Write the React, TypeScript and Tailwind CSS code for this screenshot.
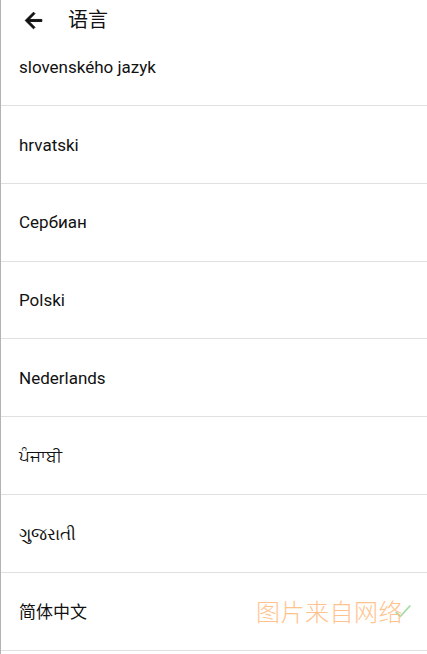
const languages: string[] = [
  "slovenského jazyk",
  "hrvatski",
  "Сербиан",
  "Polski",
  "Nederlands",
  "ਪੰਜਾਬੀ",
  "ગુજરાતી",
  "简体中文",
];

const App = () => {
  return (
    <div
      className="relative w-[427px] h-[654px] bg-white border-l border-[#b4b4b4] flex flex-col overflow-hidden"
      style={{ fontFamily: 'Roboto, "Noto Sans", "Noto Sans CJK SC", sans-serif' }}
    >
      <div className="relative z-10 h-[40px] shrink-0 bg-white flex items-center">
        <svg viewBox="0 0 24 24" className="ml-[20px] w-[25px] h-[25px] fill-[#111] stroke-[#111] stroke-[0.9]">
          <path d="M20 11H7.83l5.59-5.59L12 4l-8 8 8 8 1.41-1.41L7.83 13H20v-2z" />
        </svg>
        <span className="ml-[22px] text-[20px] text-[#111]">语言</span>
      </div>

      <div className="flex-1 overflow-hidden">
        <ul className="-mt-[12px]">
          {languages.map((lang) => (
            <li
              key={lang}
              className="h-[77.86px] flex items-center pl-[18px] pt-[2px] border-b border-[#e0e0e0] text-[17px] text-[#111]"
            >
              {lang}
            </li>
          ))}
        </ul>
      </div>

      <svg
        viewBox="0 0 24 24"
        className="absolute left-[391px] top-[600px] w-[22px] h-[22px] fill-none stroke-[#a6dca6] stroke-[2]"
      >
        <path d="M4 13l5 5L20 6" />
      </svg>
      <div className="pointer-events-none absolute left-[255px] top-[601px] text-[24px] leading-none tracking-[0.5px] font-light text-[#ffbd82] opacity-90">
        图片来自网络
      </div>
    </div>
  );
};

export default App;
